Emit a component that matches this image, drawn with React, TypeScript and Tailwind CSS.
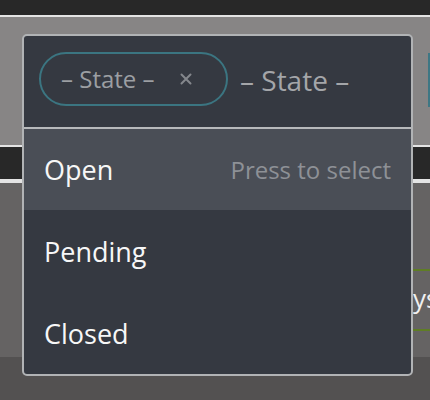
import React from "react";

export default function App() {
  const font = { fontFamily: '"Open Sans", "Noto Sans", sans-serif' };
  return (
    <div className="relative w-[430px] h-[400px] overflow-hidden flex flex-col bg-[#535151]" style={font}>
      <div className="h-[15px] bg-[#282828]" />
      <div className="h-[2px] bg-[#e4e4e4]" />
      <div className="h-[128px] bg-[#878585] flex justify-end pt-[36px]">
        <div className="w-[2px] h-[54px] bg-[#3e7784]" />
      </div>
      <div className="h-[2px] bg-[#e4e4e4]" />
      <div className="h-[32px] bg-[#282828]" />
      <div className="h-[4px] bg-[#e4e4e4]" />
      <div className="h-[174px] bg-[#656363] flex justify-end pt-[86px]">
        <div className="w-[17px] h-[62px] border-y-2 border-[#5f7d25] overflow-hidden flex items-center">
          <span className="text-[26px] leading-none text-[#f0f0f0] whitespace-nowrap -mt-[4px]">ys</span>
        </div>
      </div>
      <div className="flex-1 bg-[#535151]" />

      <div className="absolute left-[22px] top-[34px] w-[391px] h-[342px] border-2 border-[#b1b3b5] rounded-[5px] overflow-hidden flex flex-col bg-[#353941]">
        <div className="h-[91px] flex items-start pt-[16px] pl-[15px] gap-[12px]">
          <div className="h-[54px] w-[189px] rounded-full border-2 border-[#3b7581] flex items-center pl-[20px]">
            <span className="text-[24px] leading-none text-[#9c9fa3] whitespace-nowrap">– State –</span>
            <svg className="ml-[25px]" width="12" height="12" viewBox="0 0 12 12">
              <path d="M1.5 1.5 L10.5 10.5 M10.5 1.5 L1.5 10.5" stroke="#84878c" strokeWidth="2" strokeLinecap="round" />
            </svg>
          </div>
          <div className="h-[54px] flex items-center pt-[1px]">
            <span className="text-[28px] leading-none text-[#a4a6a9] whitespace-nowrap">– State –</span>
          </div>
        </div>
        <div className="h-[2px] bg-[#b7b9bb]" />
        <div className="h-[81px] bg-[#4a4e56] flex items-center justify-between pl-[20px] pr-[20px]">
          <span className="text-[27px] leading-none text-[#f7f7f7]">Open</span>
          <span className="text-[24px] leading-none text-[#8e9196]">Press to select</span>
        </div>
        <div className="h-[82px] flex items-center pl-[20px]">
          <span className="text-[27px] leading-none text-[#f7f7f7]">Pending</span>
        </div>
        <div className="h-[82px] flex items-center pl-[20px]">
          <span className="text-[27px] leading-none text-[#f7f7f7]">Closed</span>
        </div>
      </div>
    </div>
  );
}
